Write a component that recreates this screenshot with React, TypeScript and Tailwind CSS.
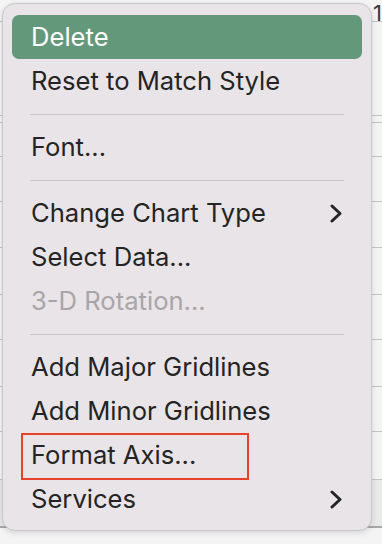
import React from "react";

type Item =
  | { kind: "item"; label: string; submenu?: boolean; disabled?: boolean; active?: boolean; marked?: boolean }
  | { kind: "sep" };

const items: Item[] = [
  { kind: "item", label: "Delete", active: true },
  { kind: "item", label: "Reset to Match Style" },
  { kind: "sep" },
  { kind: "item", label: "Font..." },
  { kind: "sep" },
  { kind: "item", label: "Change Chart Type", submenu: true },
  { kind: "item", label: "Select Data..." },
  { kind: "item", label: "3-D Rotation...", disabled: true },
  { kind: "sep" },
  { kind: "item", label: "Add Major Gridlines" },
  { kind: "item", label: "Add Minor Gridlines" },
  { kind: "item", label: "Format Axis...", marked: true },
  { kind: "item", label: "Services", submenu: true },
];

// spreadsheet rows peeking out behind the menu
const sheetRows = [22, 94, 7, 34, 45, 46, 47, 45, 47, 45, 48];

const Chevron = ({ color }: { color: string }) => (
  <svg width="12" height="19" viewBox="0 0 12 19" fill="none">
    <polyline
      points="2,2 10,9.5 2,17"
      stroke={color}
      strokeWidth="3"
      strokeLinecap="round"
      strokeLinejoin="round"
    />
  </svg>
);

const MenuRow = ({ item }: { item: Extract<Item, { kind: "item" }> }) => {
  const textColor = item.active
    ? "text-white"
    : item.disabled
    ? "text-[#a9a5a8]"
    : "text-[#242424]";

  return (
    <div
      className={`relative flex h-[44px] items-center justify-between rounded-[7px] pl-[19px] pr-[20px] text-[25.6px] leading-[44px] ${textColor} ${
        item.active ? "bg-[#64987a]" : ""
      }`}
    >
      <span>{item.label}</span>
      {item.submenu && <Chevron color="#242424" />}
      {item.marked && (
        <div className="absolute left-[9px] top-0 h-[47px] w-[228px] border-2 border-[#e5432d]" />
      )}
    </div>
  );
};

export default function App() {
  return (
    <div
      className="relative h-[544px] w-[382px] overflow-hidden bg-[#f4f4f4]"
      style={{ fontFamily: "Inter, 'Noto Sans', sans-serif" }}
    >
      {/* sheet behind */}
      <div className="flex flex-col">
        {sheetRows.map((h, i) => (
          <div
            key={i}
            className="border-b border-[#c4c4c4]"
            style={{ height: h }}
          />
        ))}
        <div className="h-[48px] border-b-2 border-[#a8a8a8] bg-[#e9e9e9]" />
      </div>
      <span className="absolute right-0 top-[2px] text-[22px] leading-none text-[#3a3a3a]">
        1
      </span>

      {/* context menu */}
      <div className="absolute left-[2px] top-[3px] flex h-[528px] w-[370px] flex-col rounded-[13px] border border-[#c9c5c8] bg-[#e8e4e7] px-[9px] pt-[11px] shadow-[0_2px_6px_rgba(0,0,0,0.12)]">
        {items.map((item, i) =>
          item.kind === "sep" ? (
            <div key={i} className="flex h-[22px] items-center px-[18px]">
              <div className="h-px w-full bg-[#cbc7ca]" />
            </div>
          ) : (
            <MenuRow key={i} item={item} />
          )
        )}
      </div>
    </div>
  );
}
